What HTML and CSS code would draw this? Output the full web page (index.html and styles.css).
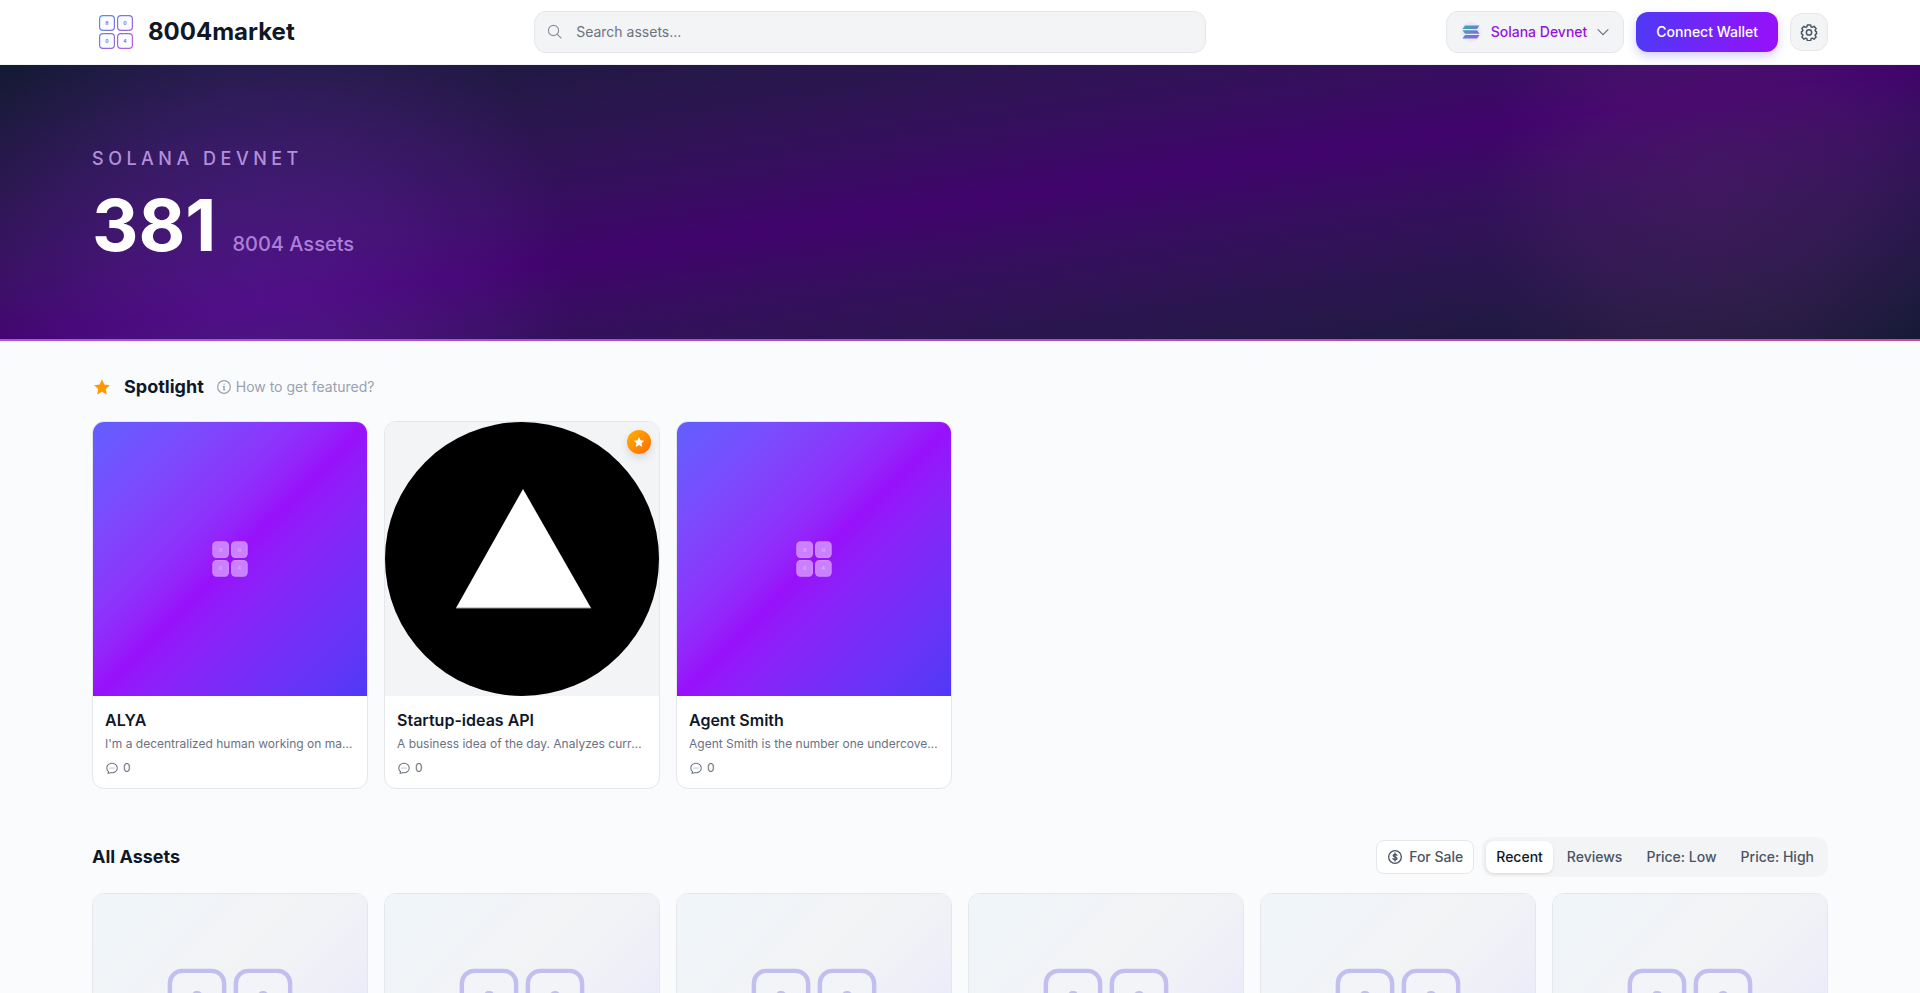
FILE: index.html
```html
<!DOCTYPE html>
<html lang="en">
<head>
    <meta charset="UTF-8">
    <meta name="viewport" content="width=device-width, initial-scale=1.0">
    <title>8004market</title>
    <link rel="stylesheet" href="styles.css">
</head>
<body>
    <!-- shared icons -->
    <svg class="sprite" aria-hidden="true">
        <defs>
            <linearGradient id="logoGradient" gradientUnits="userSpaceOnUse" x1="7" y1="7" x2="41" y2="41">
                <stop offset="0" stop-color="#3b9be8"/>
                <stop offset="0.5" stop-color="#8b6be0"/>
                <stop offset="1" stop-color="#b65fe0"/>
            </linearGradient>
            <linearGradient id="solGradient" x1="0" y1="0" x2="1" y2="1">
                <stop offset="0" stop-color="#36b0b0"/>
                <stop offset="1" stop-color="#8f5cd8"/>
            </linearGradient>
        </defs>
        <symbol id="logo" viewBox="0 0 48 48">
            <rect x="7.6" y="7.6" width="14.8" height="14.8" rx="3.4"/>
            <rect x="25.6" y="7.6" width="14.8" height="14.8" rx="3.4"/>
            <rect x="7.6" y="25.6" width="14.8" height="14.8" rx="3.4"/>
            <rect x="25.6" y="25.6" width="14.8" height="14.8" rx="3.4"/>
            <g class="digits" text-anchor="middle">
                <text x="15" y="17">8</text>
                <text x="33" y="17">0</text>
                <text x="15" y="35">0</text>
                <text x="33" y="35">4</text>
            </g>
        </symbol>
        <symbol id="star" viewBox="0 0 24 24">
            <path fill="currentColor" d="M12 1.8l3.1 6.9 7.4.8-5.5 5 1.5 7.4L12 18.200l-6.500 3.700 1.500-7.400-5.500-5 7.400-.8z"/>
        </symbol>
        <symbol id="chat" viewBox="0 0 24 24">
            <path fill="none" stroke="currentColor" stroke-width="1.800" stroke-linecap="round" stroke-linejoin="round" d="M8.600 12h.01M12 12h.01M15.400 12h.01M21 12c0 4.600-4 8.250-9 8.250a9.800 9.800 0 0 1-2.600-.35A6 6 0 0 1 6 21a6 6 0 0 1-1-.1 4.500 4.500 0 0 0 1-2c.1-.5-.2-1-.5-1.300A7.900 7.900 0 0 1 3 12c0-4.600 4-8.250 9-8.250S21 7.400 21 12z"/>
        </symbol>
    </svg>

    <header class="header">
        <div class="container header-row">
            <a class="brand" href="#">
                <svg class="brand-logo"><use href="#logo"/></svg>
                <span>8004market</span>
            </a>
            <form class="search" role="search">
                <svg class="search-icon" viewBox="0 0 24 24" fill="none" stroke="currentColor" stroke-width="1.5" stroke-linecap="round"><path d="M20 20l-5.200-5.200"/><circle cx="10" cy="10" r="6.800"/></svg>
                <input type="search" aria-label="Search assets" placeholder="Search assets...">
            </form>
            <div class="actions">
                <button class="network" type="button">
                    <svg class="sol" viewBox="0 0 22 22"><circle cx="10" cy="11" r="10" fill="#ece8fb"/><path fill="url(#solGradient)" d="M4 4.500h14.500L16 8H1.500zM1.500 9.200H16l2.500 3.500H4zM4 13.900h14.500L16 17.400H1.500z"/></svg>
                    <span>Solana Devnet</span>
                    <svg class="chevron" viewBox="0 0 24 24" fill="none" stroke="currentColor" stroke-width="1.8" stroke-linecap="round" stroke-linejoin="round"><path d="M4.500 8.500l7.500 7.500 7.500-7.500"/></svg>
                </button>
                <button class="connect" type="button">Connect Wallet</button>
                <button class="settings" type="button" aria-label="Settings">
                    <svg viewBox="0 0 24 24" fill="none" stroke="currentColor" stroke-width="2" stroke-linejoin="round"><path d="M9.800 2.500h4.400l.6 2.600 1.500.7 2.400-1.400 2.800 2.900-1.400 2.400.6 1.300 1.300.5v3l-1.300.5-.6 1.300 1.400 2.400-2.800 2.900-2.400-1.400-1.500.7-.6 2.600H9.800l-.6-2.600-1.500-.7-2.400 1.400-2.800-2.900 1.400-2.400-.6-1.300-1.300-.5v-3l1.300-.5.6-1.300-1.400-2.400 2.800-2.900 2.400 1.400 1.500-.7z"/><circle cx="12" cy="12.500" r="3.500"/></svg>
                </button>
            </div>
        </div>
    </header>

    <section class="hero">
        <div class="container">
            <p class="hero-label">SOLANA DEVNET</p>
            <p class="hero-count"><strong>381</strong> <span>8004 Assets</span></p>
        </div>
    </section>

    <main class="container">
        <section class="spotlight">
            <div class="section-head">
                <svg class="star"><use href="#star"/></svg>
                <h2>Spotlight</h2>
                <a class="featured-link" href="#">
                    <svg viewBox="0 0 24 24" fill="none" stroke="currentColor" stroke-width="1.8" stroke-linecap="round"><circle cx="12" cy="12" r="9.500"/><path d="M10.800 11.300h1.500l-.6 5h1.500M12.200 7.800h.01"/></svg>
                    How to get featured?
                </a>
            </div>
            <div class="grid">
                <article class="card">
                    <div class="thumb thumb-gradient"><svg class="thumb-logo"><use href="#logo"/></svg></div>
                    <div class="card-body">
                        <h3>ALYA</h3>
                        <p>I'm a decentralized human working on many</p>
                        <div class="reviews"><svg><use href="#chat"/></svg>0</div>
                    </div>
                </article>
                <article class="card">
                    <div class="thumb">
                        <svg class="thumb-art" viewBox="0 0 274 274"><circle cx="137" cy="137" r="137"/><path d="M138 67l68 119H71z" fill="#fff"/><path d="M71 186h135" stroke="#999"/></svg>
                        <span class="badge"><svg><use href="#star"/></svg></span>
                    </div>
                    <div class="card-body">
                        <h3>Startup-ideas API</h3>
                        <p>A business idea of the day. Analyzes current</p>
                        <div class="reviews"><svg><use href="#chat"/></svg>0</div>
                    </div>
                </article>
                <article class="card">
                    <div class="thumb thumb-gradient"><svg class="thumb-logo"><use href="#logo"/></svg></div>
                    <div class="card-body">
                        <h3>Agent Smith</h3>
                        <p>Agent Smith is the number one undercover agent</p>
                        <div class="reviews"><svg><use href="#chat"/></svg>0</div>
                    </div>
                </article>
            </div>
        </section>

        <section>
            <div class="assets-head">
                <h2>All Assets</h2>
                <div class="filters">
                    <button class="for-sale" type="button">
                        <svg viewBox="0 0 24 24" fill="none" stroke="currentColor" stroke-width="2" stroke-linecap="round"><circle cx="12" cy="12" r="9.500"/><path d="M12 6v12M15 9.300C14 7.500 9.300 7.500 9.300 9.900c0 2.300 5.700 1.900 5.700 4.200 0 2.400-5 2.400-6 .3"/></svg>
                        For Sale
                    </button>
                    <div class="tabs">
                        <button class="active" type="button">Recent</button>
                        <button type="button">Reviews</button>
                        <button type="button">Price: Low</button>
                        <button type="button">Price: High</button>
                    </div>
                </div>
            </div>
            <div class="grid">
                <article class="card"><div class="thumb thumb-empty"><svg class="empty-logo"><use href="#logo"/></svg></div></article>
                <article class="card"><div class="thumb thumb-empty"><svg class="empty-logo"><use href="#logo"/></svg></div></article>
                <article class="card"><div class="thumb thumb-empty"><svg class="empty-logo"><use href="#logo"/></svg></div></article>
                <article class="card"><div class="thumb thumb-empty"><svg class="empty-logo"><use href="#logo"/></svg></div></article>
                <article class="card"><div class="thumb thumb-empty"><svg class="empty-logo"><use href="#logo"/></svg></div></article>
                <article class="card"><div class="thumb thumb-empty"><svg class="empty-logo"><use href="#logo"/></svg></div></article>
            </div>
        </section>
    </main>
</body>
</html>
```
FILE: styles.css
```css
* {
    box-sizing: border-box;
}

html {
    scrollbar-width: none;
}

body {
    margin: 0;
    font-family: Inter, sans-serif;
    font-size: 14px;
    line-height: 20px;
    color: #101828;
    background: #fafbfd;
}

h2, h3, p {
    margin: 0;
}

h2 {
    font-size: 18px;
    line-height: 28px;
    font-weight: 700;
}

button, input {
    font: inherit;
    color: inherit;
}

button {
    border: 0;
    cursor: pointer;
    font-weight: 500;
    white-space: nowrap;
}

a {
    color: inherit;
    text-decoration: none;
}

svg {
    display: block;
    flex-shrink: 0;
}

.sprite {
    position: absolute;
    width: 0;
    height: 0;
}

.container {
    max-width: 1800px;
    margin: 0 auto;
    padding: 0 32px;
}

/* header */
.header {
    background: #fff;
    border-bottom: 1px solid #f3f4f6;
}

.header-row {
    display: flex;
    align-items: center;
    justify-content: space-between;
    height: 64px;
}

.brand {
    display: flex;
    align-items: center;
    gap: 8px;
    font-size: 24px;
    line-height: 32px;
    font-weight: 700;
}

.brand-logo {
    width: 48px;
    height: 48px;
    --digit-color: #7578d8;
    fill: #fbfcff;
    stroke: url(#logoGradient);
    stroke-width: 1.2px;
}

.digits {
    font-family: Inter, sans-serif;
    font-size: 5px;
    font-weight: 700;
    fill: var(--digit-color);
    stroke: none;
}

.search {
    display: flex;
    align-items: center;
    gap: 12px;
    flex: 0 1 672px;
    height: 42px;
    padding: 0 11px;
    background: #f3f4f6;
    border: 1px solid #e5e7eb;
    border-radius: 12px;
}

.search-icon {
    width: 18px;
    height: 18px;
    color: #8b919c;
}

.search input {
    flex: 1;
    min-width: 0;
    padding: 0;
    border: 0;
    outline: 0;
    background: none;
}

.search input::placeholder {
    color: #6a7282;
}

.actions {
    display: flex;
    align-items: center;
    gap: 12px;
}

.network {
    display: flex;
    align-items: center;
    gap: 8px;
    height: 42px;
    padding: 0 12px 0 14px;
    color: #9514db;
    background: #f3f4f6;
    border: 1px solid #e5e7eb;
    border-radius: 12px;
}

.sol {
    width: 22px;
    height: 22px;
}

.chevron {
    width: 16px;
    height: 16px;
    color: #6a7282;
}

.connect {
    height: 40px;
    padding: 0 20px;
    color: #fff;
    background: linear-gradient(to right, #4f39f6, #9810fa);
    border-radius: 12px;
    box-shadow: 0 4px 10px rgba(79, 57, 246, 0.25);
}

.settings {
    display: grid;
    place-items: center;
    width: 38px;
    height: 38px;
    padding: 0;
    color: #4a5565;
    background: #f3f4f6;
    border: 1px solid #e5e7eb;
    border-radius: 12px;
}

.settings svg {
    width: 18px;
    height: 18px;
}

/* hero */
.hero {
    padding: 80px 0 76px;
    color: #fff;
    background:
        linear-gradient(to right, #a855e8, #a44fd6 40%, #c64b9c) bottom / 100% 2px no-repeat,
        radial-gradient(310px 360px at 260px 85%, rgba(118, 40, 200, 0.32), rgba(118, 40, 200, 0.2) 50%, transparent),
        radial-gradient(230px 360px at 1715px 50%, rgba(130, 50, 130, 0.18), rgba(130, 50, 130, 0.13) 50%, transparent),
        linear-gradient(to bottom right in oklab, #141a34, #40036c, #141a34);
}

.hero-label {
    font-size: 18px;
    line-height: 28px;
    font-weight: 500;
    letter-spacing: 0.25em;
    color: #b48fdc;
}

.hero-count {
    display: flex;
    align-items: baseline;
    gap: 16px;
    margin-top: 12px;
}

.hero-count strong {
    font-size: 72px;
    line-height: 80px;
    font-weight: 700;
}

.hero-count span {
    font-size: 20px;
    font-weight: 500;
    color: #ad7fd8;
}

/* spotlight */
.spotlight {
    padding: 32px 0 48px;
}

.section-head {
    display: flex;
    align-items: center;
    gap: 12px;
    margin-bottom: 20px;
}

.star {
    width: 20px;
    height: 20px;
    padding: 1px;
    color: #fe9a00;
}

.featured-link {
    display: flex;
    align-items: center;
    gap: 4px;
    color: #99a1af;
}

.featured-link svg {
    width: 16px;
    height: 16px;
}

.grid {
    display: grid;
    grid-template-columns: repeat(6, minmax(0, 1fr));
    gap: 16px;
}

.card {
    overflow: hidden;
    background: #fff;
    border: 1px solid #e5e7eb;
    border-radius: 12px;
}

.thumb {
    position: relative;
    display: grid;
    place-items: center;
    aspect-ratio: 1;
    background: #f3f4f6;
}

.thumb-gradient {
    background: linear-gradient(to bottom right in oklab, #615fff, #9810fa, #4f39f6);
}

.thumb-empty {
    background: linear-gradient(to bottom right, #eff5fa, #f2f3f5 40%, #f1f2f6 50%, #e9eafb 75%, #f3edfb);
}

.thumb-art {
    width: 100%;
    height: 100%;
}

.thumb-logo {
    width: 50px;
    height: 50px;
    --digit-color: #dcaaff;
    fill: #cb80ff;
    stroke: #d08cff;
    stroke-width: 1.2px;
}

.empty-logo {
    width: 176px;
    height: 176px;
    --digit-color: #c2bff0;
    fill: #f2f4f8;
    stroke: #c2bff0;
    stroke-width: 1.2px;
}

.badge {
    position: absolute;
    top: 8px;
    right: 8px;
    display: grid;
    place-items: center;
    width: 24px;
    height: 24px;
    color: #fff;
    background: linear-gradient(to bottom right, #ffb300, #ff6900);
    border-radius: 50%;
    box-shadow: 0 4px 8px rgba(0, 0, 0, 0.12);
}

.badge svg {
    width: 12px;
    height: 12px;
}

.card-body {
    padding: 12px;
}

.card-body h3 {
    font-size: 16px;
    line-height: 24px;
    font-weight: 600;
}

.card-body p {
    overflow: hidden;
    margin-bottom: 4px;
    font-size: 12px;
    line-height: 24px;
    color: #6a7282;
    text-overflow: ellipsis;
    white-space: nowrap;
}

.reviews {
    display: flex;
    align-items: center;
    gap: 4px;
    font-size: 12px;
    line-height: 16px;
    color: #6a7282;
}

.reviews svg {
    width: 14px;
    height: 14px;
}

/* all assets */
.assets-head {
    display: flex;
    align-items: center;
    justify-content: space-between;
    margin-bottom: 16px;
}

.filters {
    display: flex;
    align-items: center;
    gap: 8px;
    color: #4a5565;
}

.for-sale {
    display: flex;
    align-items: center;
    gap: 6px;
    height: 34px;
    padding: 0 10px;
    background: #fff;
    border: 1px solid #e5e7eb;
    border-radius: 8px;
}

.for-sale svg {
    width: 16px;
    height: 16px;
}

.tabs {
    display: flex;
    gap: 4px;
    padding: 4px;
    background: #f3f4f6;
    border-radius: 12px;
}

.tabs button {
    height: 32px;
    padding: 0 10px;
    background: none;
    border-radius: 8px;
}

.tabs .active {
    color: #101828;
    background: #fff;
    box-shadow: 0 1px 3px rgba(0, 0, 0, 0.12);
}
```
